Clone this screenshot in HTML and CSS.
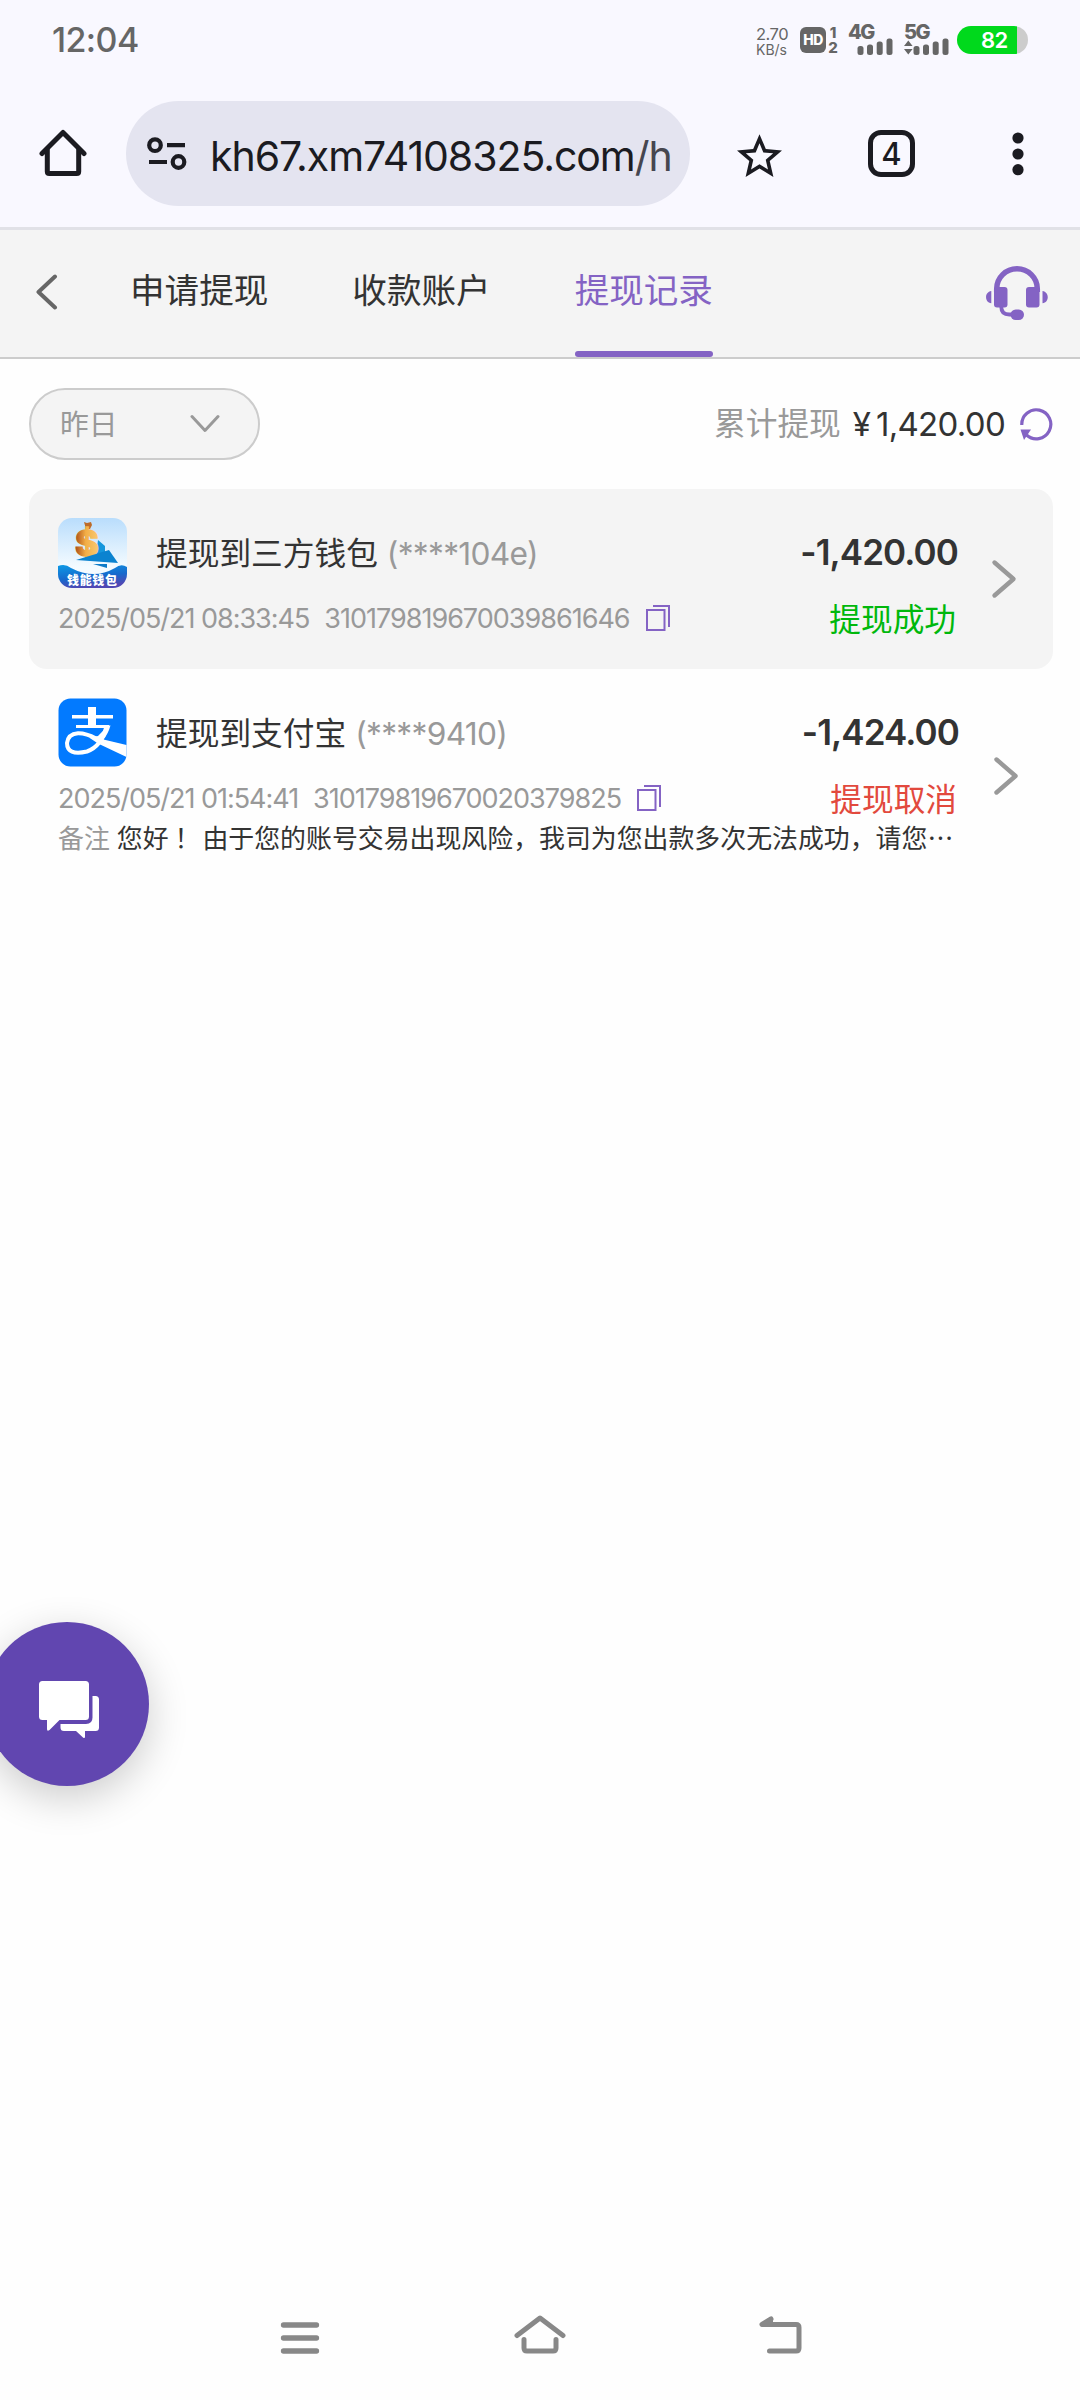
FILE: index.html
```html
<!DOCTYPE html>
<html lang="zh-CN">
<head>
<meta charset="utf-8">
<title>提现记录</title>
<link rel="stylesheet" href="styles.css">
</head>
<body>
<header class="chrome">
  <div class="status">
    <span class="clock">12:04</span>
    <div class="status-icons">
      <div class="speed"><span class="speed-num">2.70</span><span class="speed-unit">KB/s</span></div>
      <div class="hd">HD</div>
      <div class="sims"><span>1</span><span>2</span></div>
      <div class="signal">
        <span class="net">4G</span>
        <svg width="46" height="17" viewBox="0 0 46 17" fill="#666"><rect x="9.500" y="8" width="6" height="9" rx="2.500"/><rect x="19" y="6.500" width="6" height="10.500" rx="2.500"/><rect x="28.700" y="3.500" width="6" height="13.500" rx="2.500"/><rect x="38.500" y="0.500" width="6" height="16.500" rx="2.500"/></svg>
      </div>
      <div class="signal signal-data">
        <span class="net">5G</span>
        <svg width="46" height="17" viewBox="0 0 46 17" fill="#666"><path d="M0 8l4.300-5.500L8.600 8zM0 11h8.600l-4.300 5.500z"/><rect x="9.500" y="8" width="6" height="9" rx="2.500"/><rect x="19" y="6.500" width="6" height="10.500" rx="2.500"/><rect x="28.700" y="3.500" width="6" height="13.500" rx="2.500"/><rect x="38.500" y="0.500" width="6" height="16.500" rx="2.500"/></svg>
      </div>
      <div class="battery">82</div>
    </div>
  </div>
  <div class="toolbar">
    <svg class="home" width="48" height="48" viewBox="0 0 48 48" fill="none" stroke="#1b1b21" stroke-width="5" stroke-linecap="round" stroke-linejoin="round"><path d="M3 24.500L24 3.500l21 21"/><path d="M8.300 21v21.500q0 2 2 2h27.400q2 0 2-2V21"/></svg>
    <div class="address">
      <svg width="40" height="34" viewBox="0 0 40 34" fill="none" stroke="#1b1b21" stroke-width="4.200"><circle cx="8" cy="8.200" r="5.800"/><path d="M20 8.200h18M2 25h18"/><circle cx="31.500" cy="25" r="5.800"/></svg>
      <span class="url">kh67.xm74108325.com<span class="path">/h</span></span>
    </div>
    <svg class="star" width="45" height="43" viewBox="2 2 20 19" fill="#1b1b21"><path d="M22 9.240l-7.190-.62L12 2 9.190 8.630 2 9.240l5.460 4.730L5.820 21 12 17.270 18.180 21l-1.630-7.030L22 9.240zM12 15.400l-3.760 2.270 1-4.280-3.320-2.880 4.380-.38L12 6.100l1.710 4.040 4.380.38-3.320 2.880 1 4.280L12 15.400z"/></svg>
    <div class="tabcount">4</div>
    <svg class="more" width="12" height="44" viewBox="0 0 12 44" fill="#1b1b21"><circle cx="6" cy="6" r="5.600"/><circle cx="6" cy="22" r="5.600"/><circle cx="6" cy="37.700" r="5.600"/></svg>
  </div>
</header>

<nav class="tabs">
  <svg class="back" width="24" height="36" viewBox="0 0 24 36" fill="none" stroke="#666" stroke-width="4" stroke-linecap="round" stroke-linejoin="round"><path d="M20 2.500L3.500 18 20 33.500"/></svg>
  <div class="tab-list">
    <a class="tab">申请提现</a>
    <a class="tab">收款账户</a>
    <a class="tab active">提现记录</a>
  </div>
  <svg class="service" width="62" height="54" viewBox="0 0 62 54" fill="#8463c4"><path d="M10.700 26v-3.200a20.300 20 0 0 1 40.600 0V26" fill="none" stroke="#8463c4" stroke-width="5.500"/><rect x="8" y="21" width="13.500" height="20.500" rx="3"/><rect x="40" y="21" width="13.500" height="20.500" rx="3"/><path d="M5.300 25v12.300C-1.700 36.300-1.700 26 5.300 25zM56.500 25v12.300c7-1 7-11.300 0-12.300z"/><path d="M15.300 40v1q0 7.500 8 7.500H27" fill="none" stroke="#8463c4" stroke-width="3.800"/><rect x="24.500" y="43.500" width="13.500" height="10.500" rx="5.200"/></svg>
</nav>

<main class="content">
  <div class="filter">
    <div class="select"><span class="day">昨日</span><svg width="30" height="20" viewBox="0 0 30 20" fill="none" stroke="#999" stroke-width="3" stroke-linecap="round" stroke-linejoin="round"><path d="M2 2.500l13 14 13-14"/></svg></div>
    <div class="total"><span class="total-label">累计提现</span><span class="yen">¥</span><span class="sum">1,420.00</span>
      <svg width="34" height="34" viewBox="0 0 34 34"><path d="M2.800 18A14.500 14.500 0 1 1 7.500 28" fill="none" stroke="#8463c4" stroke-width="3.200"/><path d="M1.500 22.500h10.500L5 33z" fill="#8463c4"/></svg>
    </div>
  </div>

  <section class="record shaded">
    <div class="left">
      <div class="title">
        <svg class="logo" width="69" height="70" viewBox="0 0 69 70">
          <defs>
            <linearGradient id="sky" x2="0" y2="1"><stop stop-color="#b9ddfc"/><stop offset=".7" stop-color="#f4fbff"/></linearGradient>
            <linearGradient id="sea" x2="0.300" y2="1"><stop stop-color="#0c9ae6"/><stop offset=".6" stop-color="#1769cc"/><stop offset="1" stop-color="#5048b4"/></linearGradient>
            <linearGradient id="gold" x2="1"><stop stop-color="#a94a17"/><stop offset=".45" stop-color="#f3ae46"/><stop offset="1" stop-color="#f8ca73"/></linearGradient>
            <clipPath id="round"><rect width="69" height="70" rx="14"/></clipPath>
          </defs>
          <g clip-path="url(#round)">
            <rect width="69" height="70" fill="url(#sky)"/>
            <path d="M40 22l7 6v8l-9 1z" fill="#1596dc"/>
            <path d="M26 4l3 1 4-1 1 3-2 4h-4z" fill="#bd6b28"/>
            <text x="17" y="38" class="dollar" fill="url(#gold)" stroke="url(#gold)">$</text>
            <path d="M18 42l33-10 9 13z" fill="#0b83d0"/>
            <path d="M35 46h14v4z" fill="#0d7bc8"/>
            <path d="M0 48q7-3 13 2 23 12 44 0 6-5 12-1v21H0z" fill="url(#sea)"/>
            <text x="9" y="66.500" class="logo-name" textLength="50">钱能钱包</text>
          </g>
        </svg>
        <span class="name">提现到三方钱包</span><span class="acct">(****104e)</span>
      </div>
      <div class="meta"><span class="time">2025/05/21 08:33:45</span><span class="order">310179819670039861646</span>
        <svg class="copy" width="26" height="28" viewBox="0 0 26 28" fill="none" stroke="#8463c4" stroke-width="2"><rect x="2" y="6" width="17.500" height="20"/><path d="M8 2h16v21"/></svg>
      </div>
    </div>
    <div class="right"><span class="amount">-1,420.00</span><span class="state ok">提现成功</span></div>
    <svg class="go" width="26" height="40" viewBox="0 0 26 40" fill="none" stroke="#999" stroke-width="4.400" stroke-linecap="round" stroke-linejoin="round"><path d="M3.500 3.500L22.500 20 3.500 36.500"/></svg>
  </section>

  <section class="record second">
    <div class="left">
      <div class="title">
        <svg class="logo" width="69" height="70" viewBox="0 0 69 70">
          <rect x="0.500" y="0.500" width="68" height="68" rx="12" fill="#027aff"/>
          <g fill="none" stroke="#fff"><path d="M14 18.700h41" stroke-width="3.400"/><path d="M34 9v20" stroke-width="8"/><path d="M18 28.500h33" stroke-width="3.200"/><path d="M48.500 28Q44 48 29 53.500 9 58 9 45 10 36 20 35.200 28 35 38 40.500" stroke-width="4"/></g>
          <path d="M48.500 27.500h4Q50 36 45.500 41.500L68.500 47v12L40 45.500 31 39.500l9-1.500q5-4 8.500-10.500z" fill="#fff"/>
        </svg>
        <span class="name">提现到支付宝</span><span class="acct">(****9410)</span>
      </div>
      <div class="meta"><span class="time">2025/05/21 01:54:41</span><span class="order">310179819670020379825</span>
        <svg class="copy" width="26" height="28" viewBox="0 0 26 28" fill="none" stroke="#8463c4" stroke-width="2"><rect x="2" y="6" width="17.500" height="20"/><path d="M8 2h16v21"/></svg>
      </div>
    </div>
    <div class="right"><span class="amount">-1,424.00</span><span class="state bad">提现取消</span></div>
    <svg class="go" width="26" height="40" viewBox="0 0 26 40" fill="none" stroke="#999" stroke-width="4.400" stroke-linecap="round" stroke-linejoin="round"><path d="M3.500 3.500L22.500 20 3.500 36.500"/></svg>
    <p class="note"><span class="note-label">备注</span>您好<span class="bang">！</span>由于您的账号交易出现风险，我司为您出款多次无法成功，请您<span class="dots">⋯</span></p>
  </section>
</main>

<div class="chat">
  <svg width="62" height="58" viewBox="0 0 62 58" fill="#fff"><path d="M3.500 0h43Q50 0 50 3.500v32q0 3.500-3.500 3.500H20.500L10.500 49Q8 51 8 48v-9H3.500Q0 39 0 35.500v-32Q0 0 3.500 0z"/><path d="M53.500 15h3q3.500 0 3.500 3.500v28q0 3.500-3.500 3.500H46v5.500q0 2.500-2 1L37 50H25q-3.500 0-3.500-3.500V43H47q6.500 0 6.500-6.500z"/></svg>
</div>

<footer class="sysnav">
  <svg width="40" height="32" viewBox="0 0 40 32" stroke="#888" stroke-width="5.300" stroke-linecap="round"><path d="M3.500 3h33M3.500 16h33M3.500 29h33"/></svg>
  <svg width="52" height="40" viewBox="0 0 52 40" fill="none" stroke="#888" stroke-width="5" stroke-linecap="round" stroke-linejoin="round"><path d="M3 21.500L26 4l23 17.500M10 25.500V34q0 3 3 3h26q3 0 3-3v-8.500"/></svg>
  <svg width="44" height="40" viewBox="0 0 44 40" fill="none" stroke="#888" stroke-width="5" stroke-linecap="round" stroke-linejoin="round"><path d="M12 5L3 10.500h34q3 0 3 3V34q0 3-3 3H10.500"/><path d="M12 5v5" stroke-width="4"/></svg>
</footer>
</body>
</html>
```

FILE: styles.css
```css
* { box-sizing: border-box; }
body {
  margin: 0;
  width: 1080px;
  height: 2400px;
  display: flex;
  flex-direction: column;
  background: #fefefe;
  color: #333;
  font-family: Inter, "Noto Sans CJK SC", sans-serif;
  white-space: nowrap;
  overflow: hidden;
}
svg { display: block; flex: none; }

/* Browser chrome */
.chrome { height: 230px; background: #f9f8ff; border-bottom: 3px solid #e1e1e7; }
.status { height: 80px; padding: 0 52px; display: flex; justify-content: space-between; color: #666; }
.clock { font-size: 34px; font-weight: 500; line-height: 79px; letter-spacing: -0.600px; }
.status-icons { display: flex; padding-top: 24px; }
.speed { width: 32px; display: flex; flex-direction: column; padding-top: 3px; margin-right: 12px; }
.speed-num { font-size: 16.500px; line-height: 15px; letter-spacing: -0.500px; }
.speed-unit { font-size: 14px; line-height: 15px; letter-spacing: 0; }
.hd {
  width: 26px; height: 26px; margin-top: 3px;
  border-radius: 6px; background: #666; color: #fff;
  font-size: 14px; font-weight: 800; line-height: 26px; text-align: center; letter-spacing: -0.500px;
}
.sims { display: flex; flex-direction: column; width: 12px; margin: 1px 9px 0 1px; font-size: 15px; font-weight: 800; line-height: 15px; text-align: center; }
.signal { width: 46px; margin-right: 10px; display: flex; flex-direction: column; }
.signal-data { margin-right: 7px; }
.net { height: 14px; font-size: 20px; font-weight: 800; line-height: 17px; letter-spacing: -1.500px; }
.battery {
  width: 71px; height: 28px; margin-top: 2px; padding-left: 24px; border-radius: 14px;
  background: linear-gradient(to right, #00d91c 60px, #ccc 60px);
  color: #fff; font-size: 22px; font-weight: 600; line-height: 28px; letter-spacing: -0.500px;
}

.toolbar { height: 147px; padding: 21px 56px 0 39px; display: flex; align-items: flex-start; }
.home { margin-top: 28px; }
.address {
  width: 564px; height: 105px; margin-left: 39px; padding-left: 21px;
  display: flex; align-items: center;
  border-radius: 53px; background: #e4e4f0; color: #1b1b21;
}
.url { margin-left: 23px; font-size: 41px; letter-spacing: -1.050px; line-height: 60px; padding-top: 4px; }
.path { color: #46464f; }
.star { margin: 33px 0 0 47px; }
.tabcount {
  width: 47px; height: 47px; margin: 29px 0 0 86px;
  border: 5px solid #1b1b21; border-radius: 13px; color: #1b1b21;
  font-size: 31px; font-weight: 500; line-height: 37px; text-align: center;
}
.more { margin: 31px 0 0 auto; }

/* Section tabs */
.tabs { height: 129px; display: flex; align-items: flex-start; padding: 0 32px 0 35px; background: #f4f4f4; border-bottom: 2px solid #ccc; }
.back { margin-top: 44px; }
.tab-list { display: flex; gap: 84px; margin-left: 71px; flex: 1; }
.tab { height: 127px; display: flex; flex-direction: column; font-size: 34.600px; line-height: 121px; }
.active { color: #8463c4; }
.active::after { content: ""; height: 6px; border-radius: 3px; background: #8463c4; }
.service { margin-top: 36px; }

/* Filter row */
.content { padding: 29px 27px 0 29px; flex: 1; }
.filter { height: 72px; display: flex; justify-content: space-between; align-items: center; }
.select {
  width: 231px; height: 72px; padding: 0 38px 0 29px;
  display: flex; align-items: center; justify-content: space-between;
  border: 2px solid #ccc; border-radius: 36px; background: #f4f4f4; color: #999; font-size: 28.800px;
}
.day { padding-bottom: 3px; }
.total { display: flex; align-items: center; font-size: 33px; line-height: 40px; }
.total-label { color: #999; font-size: 31.700px; margin-right: 12px; }
.yen { margin-right: 5px; }
.sum { letter-spacing: -0.700px; margin-right: 14px; }

/* Records */
.record { display: flex; flex-wrap: wrap; align-content: flex-start; width: 1024px; height: 180px; padding: 29px 0 0 29px; border-radius: 18px; }
.shaded { margin-top: 29px; background: #f4f4f4; }
.second { height: 220px; }
.left { width: 680px; height: 122px; }
.title { height: 70px; display: flex; align-items: flex-start; line-height: 71px; }
.name { margin-left: 29px; font-size: 31.700px; }
.acct { margin-left: 9px; font-size: 31.700px; letter-spacing: -0.700px; color: #999; }
.dollar { font-family: Inter, sans-serif; font-size: 36px; font-weight: 800; stroke-width: 1.500px; }
.logo-name { font-family: "Noto Sans CJK SC", sans-serif; font-size: 12px; font-weight: 900; fill: #fff; }
.meta { display: flex; align-items: center; height: 60px; color: #999; font-size: 27px; }
.time { letter-spacing: -1.030px; margin-right: 15px; }
.order { letter-spacing: -1px; }
.copy { margin-left: 15px; }
.right { width: 220px; height: 122px; display: flex; flex-direction: column; align-items: flex-end; }
.amount { font-size: 35px; font-weight: 600; line-height: 68px; letter-spacing: -0.900px; }
.state { font-size: 31.700px; line-height: 68px; margin-right: 2px; }
.ok { color: #00b80c; }
.bad { color: #e2493d; }
.go { margin: 41px 0 0 33px; }
.second .right { width: 221px; }
.second .go { margin: 58px 0 0 34px; }
.note { width: 920px; margin: 0; font-size: 25.900px; line-height: 38px; }
.note-label { color: #999; margin-right: 7px; }
.bang { padding: 0 2px 0 6px; }

/* Floating chat button */
.chat {
  position: absolute; left: -15px; top: 1622px;
  width: 164px; height: 164px; padding: 59px 0 0 54px;
  border-radius: 50%; background: #6146b0; box-shadow: 0 12px 40px rgba(0, 0, 0, 0.2);
}

/* System navigation */
.sysnav { height: 120px; padding: 34px 277px 0 280px; display: flex; justify-content: space-between; align-items: flex-start; }
.sysnav svg:first-child { margin-top: 8px; }
```
